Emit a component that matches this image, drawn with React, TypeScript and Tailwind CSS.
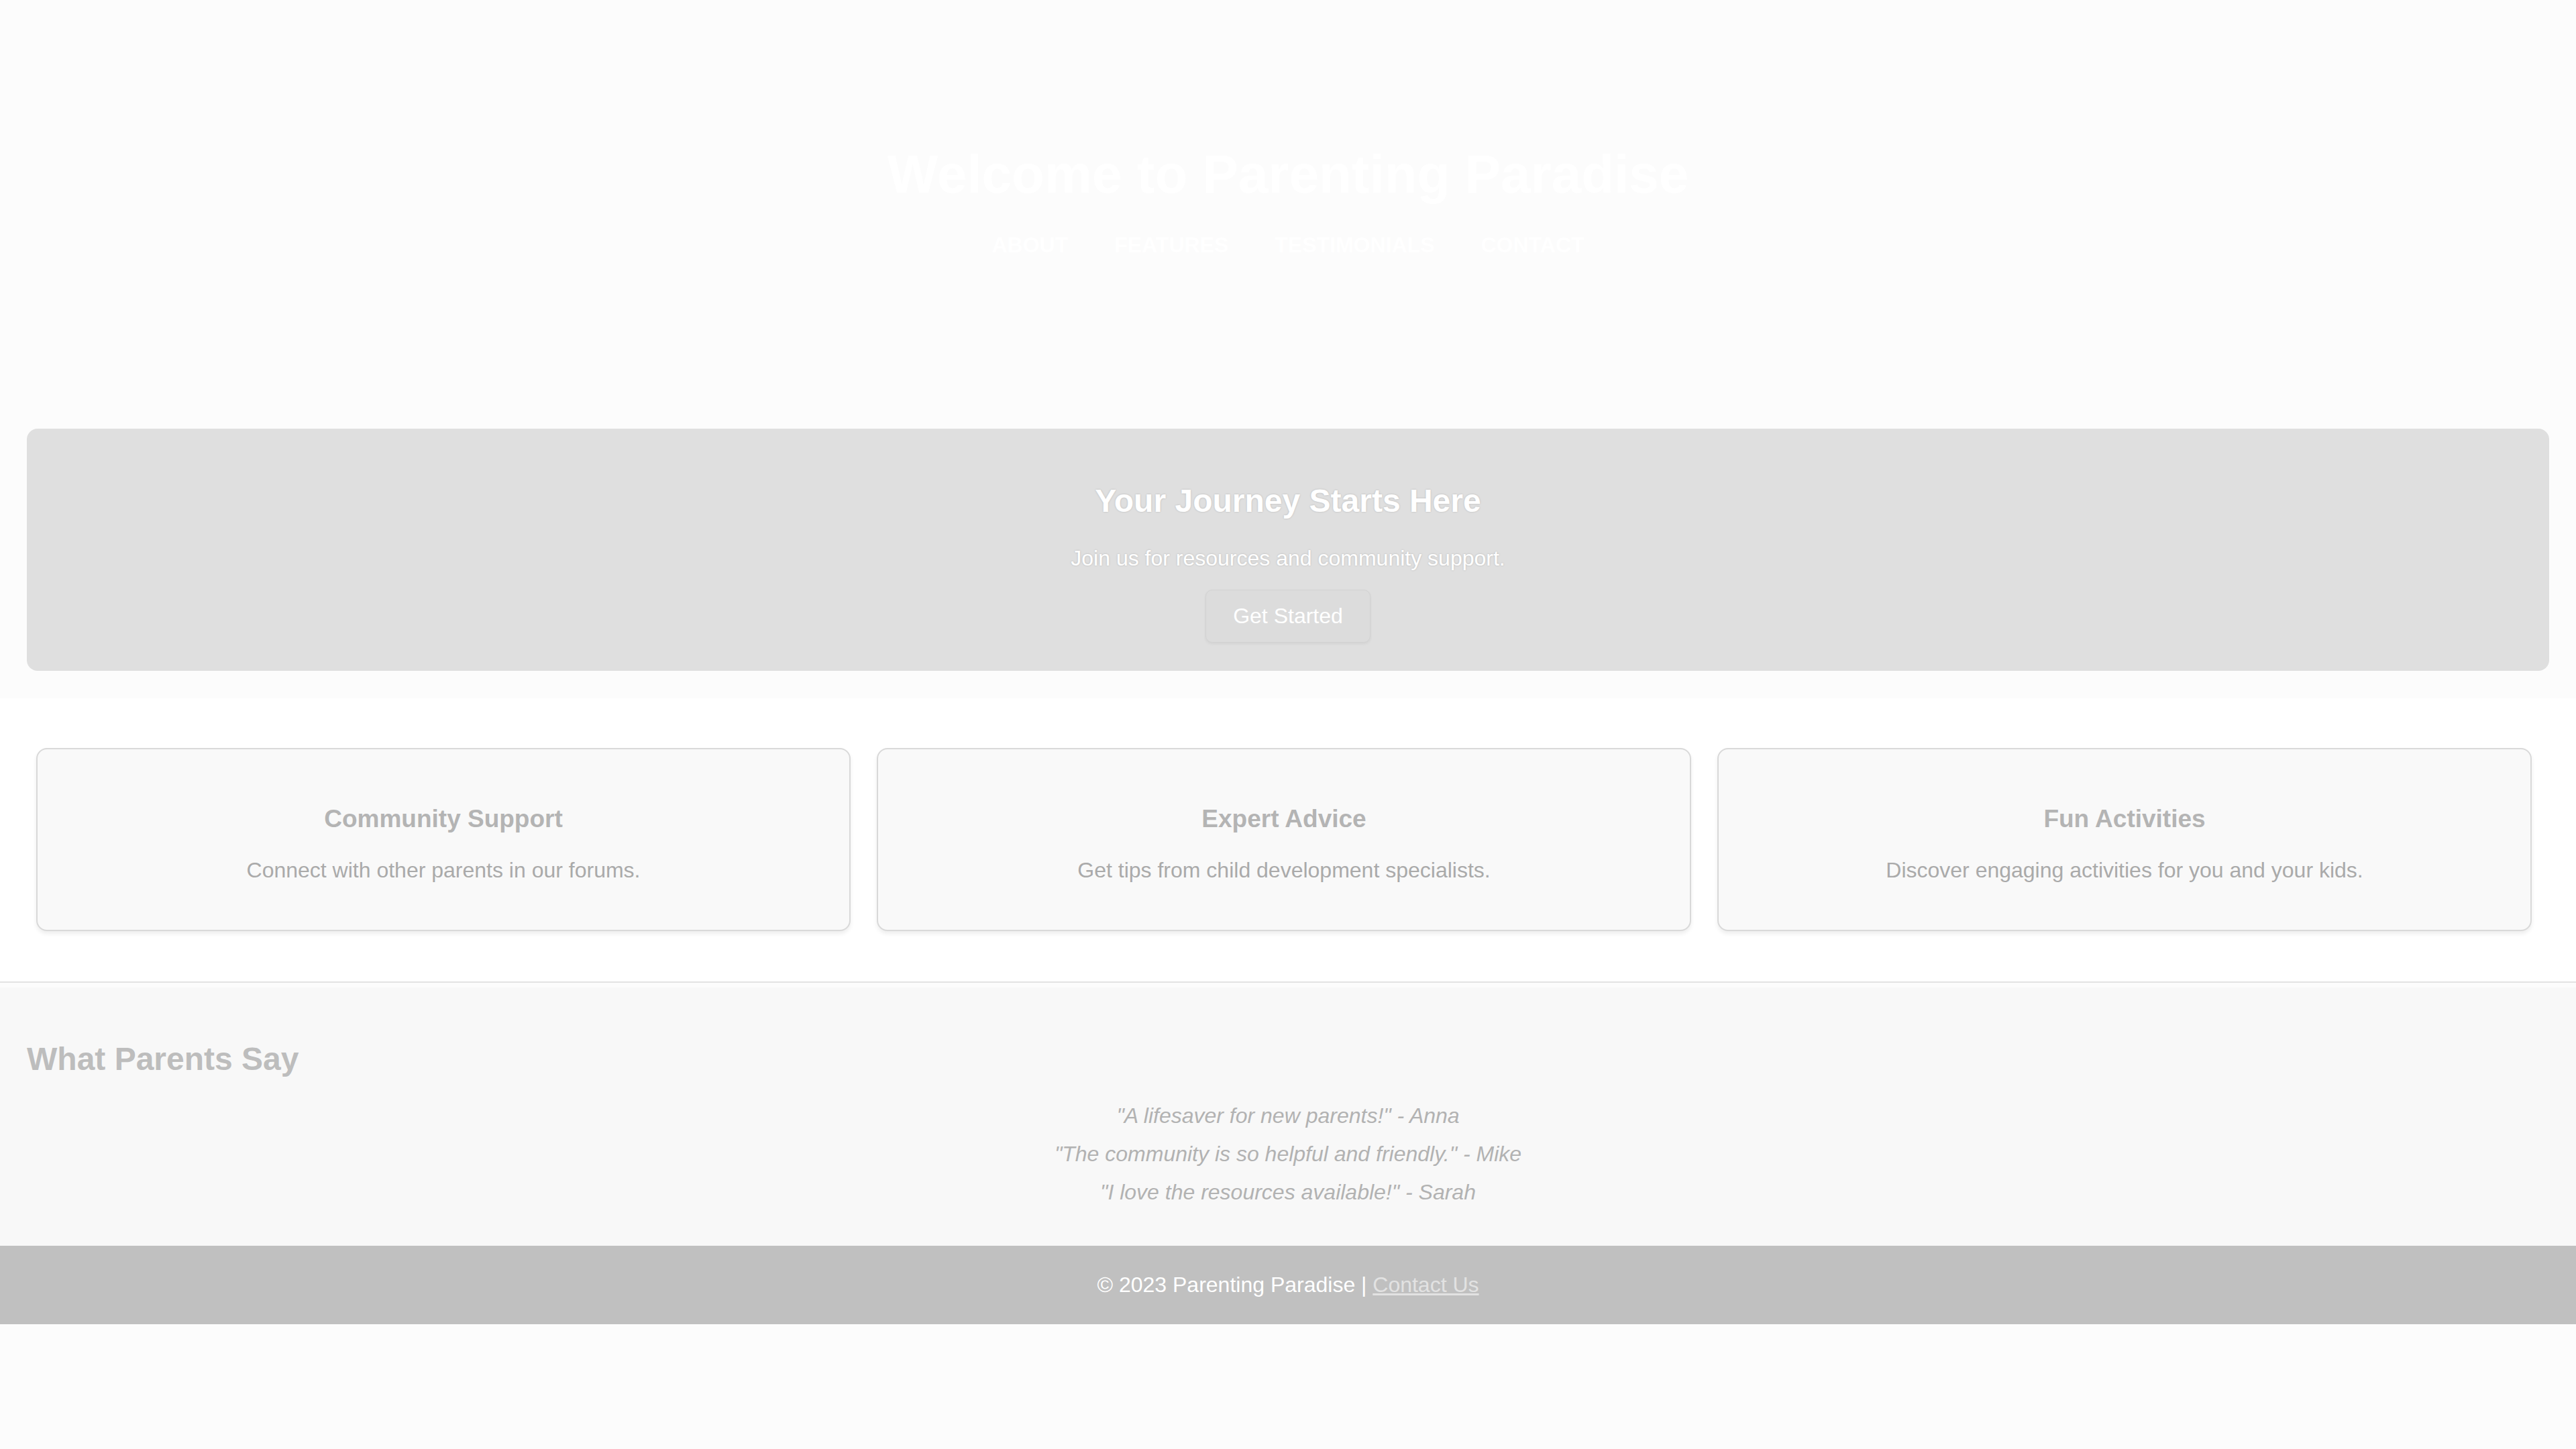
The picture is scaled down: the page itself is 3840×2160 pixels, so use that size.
const features = [
  { title: 'Community Support', text: 'Connect with other parents in our forums.' },
  { title: 'Expert Advice', text: 'Get tips from child development specialists.' },
  { title: 'Fun Activities', text: 'Discover engaging activities for you and your kids.' },
];

const quotes = [
  '"A lifesaver for new parents!" - Anna',
  '"The community is so helpful and friendly." - Mike',
  '"I love the resources available!" - Sarah',
];

export default function App() {
  return (
    <div className="min-h-screen bg-[#fcfcfc] font-['Liberation_Sans',Arial,sans-serif]">
      {/* Header + hero */}
      <header className="bg-[#fcfcfc] pt-[214px] pb-[41px]">
        <h1 className="text-center text-[80px] leading-[92px] font-bold text-white mb-[41px]">
          Welcome to Parenting Paradise
        </h1>
        <nav className="flex justify-center gap-[69px] text-[32px] leading-[37px] font-bold uppercase text-white">
          <a href="#about">About</a>
          <a href="#features">Features</a>
          <a href="#testimonials">Testimonials</a>
          <a href="#contact">Contact</a>
        </nav>

        <div className="mx-[40px] mt-[255px] rounded-[16px] bg-[#dfdfdf] pt-[80px] pb-[42px] text-center text-white [text-shadow:0_0_3px_rgba(0,0,0,0.18)]">
          <h2 className="text-[48px] leading-[55px] font-bold mb-[40px]">Your Journey Starts Here</h2>
          <p className="text-[32px] leading-[37px] mb-[28px]">Join us for resources and community support.</p>
          <button className="h-[79px] px-[40px] rounded-[10px] bg-[#dcdcdc] border border-[#d2d2d2] shadow-[0_2px_4px_rgba(0,0,0,0.06)] text-[32px] leading-[37px] text-white">
            Get Started
          </button>
        </div>
      </header>

      {/* Features */}
      <section className="bg-white pt-[74px] pb-[75px] pl-[54px] pr-[66px] border-b-2 border-[#e3e3e3]">
        <div className="grid grid-cols-3 gap-[39px]">
          {features.map((f) => (
            <div
              key={f.title}
              className="rounded-[16px] border-2 border-[#d9d9d9] bg-[#f9f9f9] shadow-[0_4px_6px_rgba(0,0,0,0.07)] pt-[82px] pb-[70px] text-center"
            >
              <h3 className="text-[37px] leading-[43px] font-bold text-[#b4b4b4] mb-[37px]">{f.title}</h3>
              <p className="text-[32px] leading-[37px] text-[#aaaaaa]">{f.text}</p>
            </div>
          ))}
        </div>
      </section>

      {/* Testimonials */}
      <section className="mt-[7px] bg-[#f8f8f8] pt-[79px] pb-[61px] px-[40px]">
        <h2 className="text-[48px] leading-[55px] font-bold text-[#bdbdbd] mb-[39px]">What Parents Say</h2>
        <div className="flex flex-col gap-[20px] text-center text-[32px] leading-[37px] italic text-[#b2b2b2]">
          {quotes.map((q) => (
            <p key={q}>{q}</p>
          ))}
        </div>
      </section>

      {/* Footer */}
      <footer className="bg-[#c0c0c0] py-[40px] text-center text-[32px] leading-[37px] text-white">
        © 2023 Parenting Paradise |{' '}
        <a href="#contact" className="underline text-[#e2e2e2]">
          Contact Us
        </a>
      </footer>
    </div>
  );
}
